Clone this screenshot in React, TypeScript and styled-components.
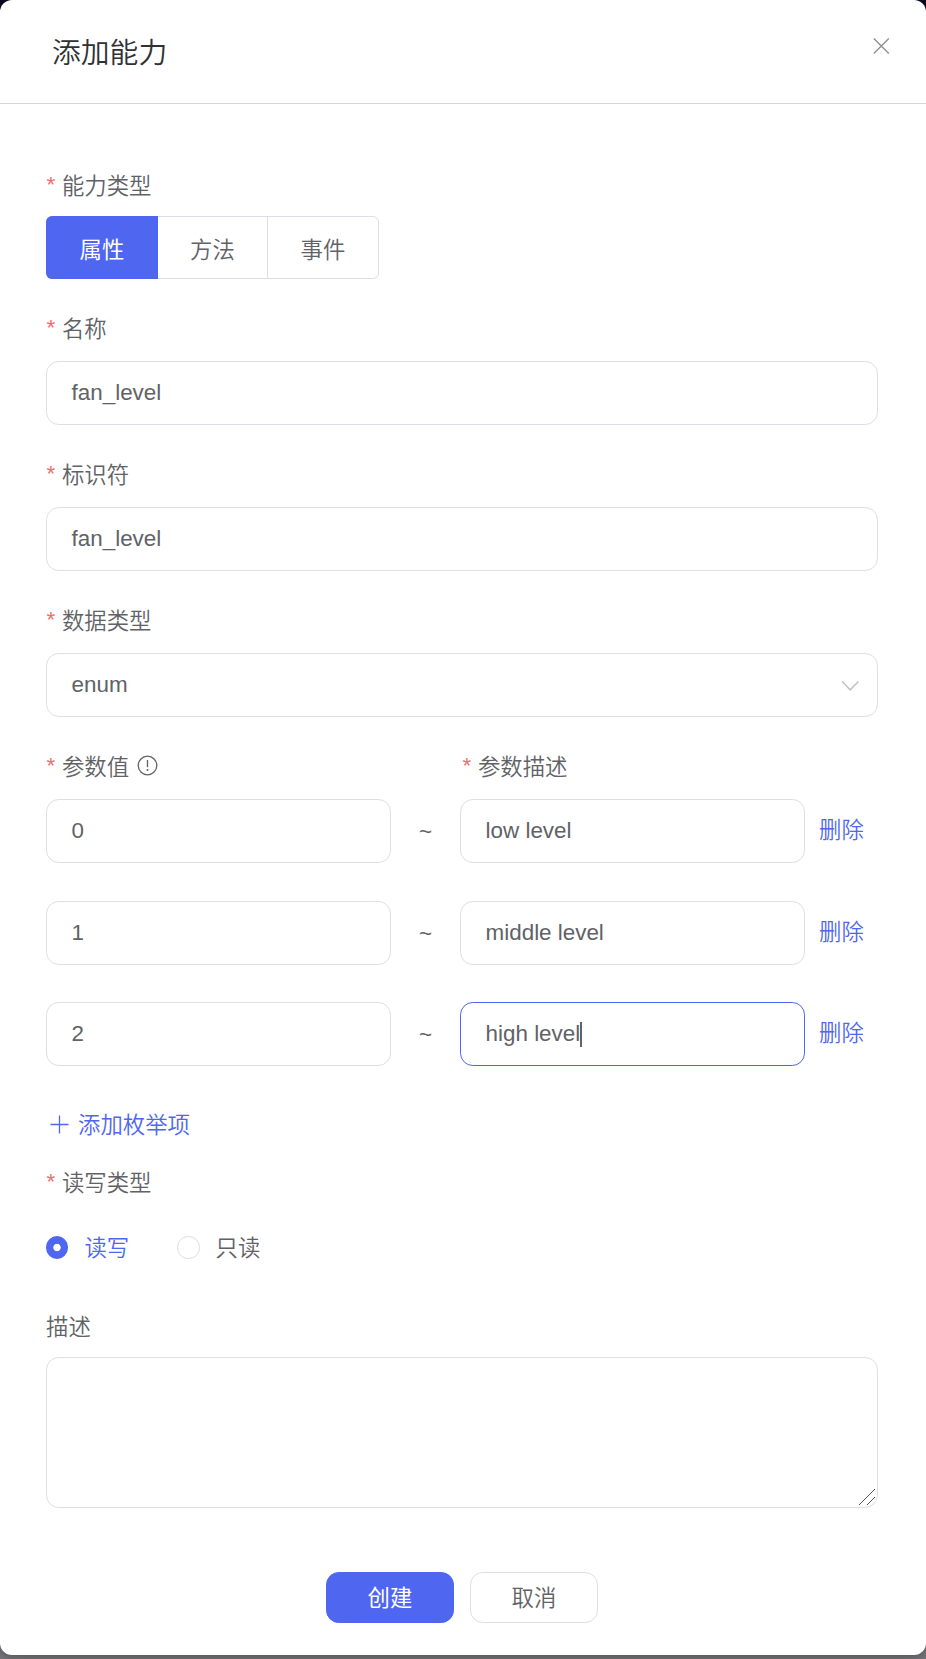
import React from 'react';
import styled, { createGlobalStyle, css } from 'styled-components';

const GlobalStyle = createGlobalStyle`
  *, *::before, *::after { box-sizing: border-box; }
  body {
    margin: 0;
    font-family: "Liberation Sans", "Noto Sans CJK SC", sans-serif;
    font-size: 22.4px;
    font-weight: 350;
    color: #606266;
  }
`;

const primary = '#4f66f0';
const line = '#dcdfe6';

const Backdrop = styled.div`
  height: 1659px;
  overflow: hidden;
  background: linear-gradient(#0b0b1e 0, #0b0b1e 100px, #76757a 200px);
`;

const Dialog = styled.div`
  display: flex;
  flex-direction: column;
  height: 1655px;
  border-radius: 12px;
  background: #fff;
  box-shadow: 0 2px 8px rgba(0, 0, 0, 0.3);
`;

const Header = styled.header`
  display: flex;
  justify-content: space-between;
  align-items: flex-start;
  height: 104px;
  padding: 29px 36px 0 52px;
  border-bottom: 1px solid #d6d6d9;
`;

const Title = styled.h1`
  margin: 2px 0 0;
  font-size: 28.8px;
  font-weight: 350;
  line-height: 44px;
  color: #303133;
`;

const CloseButton = styled.button`
  display: flex;
  margin-top: 7.5px;
  padding: 0;
  border: 0;
  background: none;
  color: #909399;
`;

const Form = styled.form`
  padding: 60px 48px 0 46px;
`;

const Label = styled.div<{ $required?: boolean }>`
  display: flex;
  align-items: center;
  height: 40px;
  white-space: nowrap;
  ${(p) =>
    p.$required &&
    css`
      &::before {
        content: '*';
        margin: 2px 6.6px 0 0.6px;
        color: #f56c6c;
      }
    `}
`;

const InfoIcon = styled.svg`
  margin-left: 8px;
`;

const Field = styled.div<{ $gap: number; $space: number }>`
  display: flex;
  flex-direction: column;
  gap: ${(p) => p.$gap}px;
  margin-bottom: ${(p) => p.$space}px;
`;

const Segments = styled.div`
  display: flex;
  width: 333px;
  height: 63px;
  border: 1px solid ${line};
  border-radius: 6px;
`;

const Segment = styled.div<{ $active?: boolean }>`
  display: flex;
  align-items: center;
  justify-content: center;
  width: 109px;
  & + & + & {
    width: 111px;
    border-left: 1px solid ${line};
  }
  ${(p) =>
    p.$active &&
    css`
      width: 112px;
      margin: -1px 0 -1px -1px;
      border-radius: 6px 0 0 6px;
      background: ${primary};
      color: #fff;
      font-weight: 400;
    `}
`;

const Control = styled.div<{ $focused?: boolean }>`
  display: flex;
  align-items: center;
  height: 64px;
  padding: 0 17px 0 24.6px;
  border: 1px solid ${(p) => (p.$focused ? primary : line)};
  border-radius: 12.8px;
  background: #fff;
`;

const Caret = styled.span`
  width: 2px;
  height: 25px;
  background: #606266;
`;

const Chevron = styled.svg`
  margin-left: auto;
  position: relative;
  top: 1px;
`;

const EnumGrid = styled.div`
  display: grid;
  grid-template-columns: 345px 69px 345px 1fr;
  align-items: center;
`;

const EnumLabels = styled(EnumGrid)`
  margin-bottom: 14px;
`;

const DescriptionLabel = styled(Label)`
  grid-column: 3;
  padding-left: 2px;
`;

const EnumRows = styled.div`
  display: flex;
  flex-direction: column;
  gap: 37.6px;
`;

const Tilde = styled.span`
  padding-top: 2px;
  text-align: center;
`;

const LinkText = styled.a`
  padding-left: 14px;
  margin-top: -6px;
  color: ${primary};
`;

const AddItem = styled.div`
  display: flex;
  align-items: center;
  gap: 8px;
  height: 40px;
  margin: 36.8px 0 18px 4px;
  color: ${primary};
`;

const PlusIcon = styled.svg`
  margin-top: 4px;
`;

const RadioRow = styled.div`
  display: flex;
  gap: 48px;
  height: 40px;
`;

const RadioOption = styled.label<{ $checked?: boolean }>`
  display: flex;
  align-items: center;
  gap: 16px;
  color: ${(p) => (p.$checked ? primary : 'inherit')};
`;

const RadioDot = styled.span<{ $checked?: boolean }>`
  width: 22.4px;
  height: 22.4px;
  margin-top: 3px;
  border-radius: 50%;
  border: 1px solid ${(p) => (p.$checked ? primary : line)};
  background: ${(p) =>
    p.$checked ? `radial-gradient(circle, #fff 3.3px, ${primary} 4.1px)` : '#fff'};
`;

const TextArea = styled.div`
  display: flex;
  justify-content: flex-end;
  align-items: flex-end;
  height: 151px;
  padding: 1px;
  border: 1px solid ${line};
  border-radius: 12.8px;
`;

const Actions = styled.footer`
  display: flex;
  justify-content: center;
  gap: 16px;
  padding-right: 2px;
  margin-top: 64px;
`;

const ActionButton = styled.button<{ $primary?: boolean }>`
  width: 128px;
  height: 51px;
  padding: 0 0 2px;
  border: 1px solid ${(p) => (p.$primary ? primary : line)};
  border-radius: 12.8px;
  background: ${(p) => (p.$primary ? primary : '#fff')};
  color: ${(p) => (p.$primary ? '#fff' : '#606266')};
  font: inherit;
  font-weight: ${(p) => (p.$primary ? 400 : 350)};
`;

const items = [
  { value: '0', text: 'low level' },
  { value: '1', text: 'middle level' },
  { value: '2', text: 'high level', focused: true },
];

export default function App() {
  return (
    <>
      <GlobalStyle />
      <Backdrop>
        <Dialog role="dialog">
          <Header>
            <Title>添加能力</Title>
            <CloseButton aria-label="关闭">
              <svg width="18" height="18" viewBox="0 0 18 18" fill="none" stroke="currentColor" strokeWidth="1.5">
                <path d="M1.8 1.5l15 15M16.8 1.5l-15 15" />
              </svg>
            </CloseButton>
          </Header>
          <Form>
            <Field $gap={12} $space={28}>
              <Label $required>能力类型</Label>
              <Segments>
                <Segment $active>属性</Segment>
                <Segment>方法</Segment>
                <Segment>事件</Segment>
              </Segments>
            </Field>
            <Field $gap={14} $space={28}>
              <Label $required>名称</Label>
              <Control>fan_level</Control>
            </Field>
            <Field $gap={14} $space={28}>
              <Label $required>标识符</Label>
              <Control>fan_level</Control>
            </Field>
            <Field $gap={14} $space={28}>
              <Label $required>数据类型</Label>
              <Control>
                enum
                <Chevron width="20" height="12" viewBox="0 0 20 12" fill="none" stroke="#c0c4cc" strokeWidth="1.6">
                  <path d="M2 1.5l8.2 8.4 8.2-8.4" />
                </Chevron>
              </Control>
            </Field>
            <EnumLabels>
              <Label $required>
                参数值
                <InfoIcon width="21" height="21" viewBox="0 0 21 21" fill="none" stroke="#606266" strokeWidth="1.3">
                  <circle cx="10.5" cy="10.5" r="9.3" />
                  <path d="M10.5 5v7.2" />
                  <circle cx="10.5" cy="14.9" r="1" fill="#606266" stroke="none" />
                </InfoIcon>
              </Label>
              <DescriptionLabel $required>参数描述</DescriptionLabel>
            </EnumLabels>
            <EnumRows>
              {items.map((item) => (
                <EnumGrid key={item.value}>
                  <Control>{item.value}</Control>
                  <Tilde>~</Tilde>
                  <Control $focused={item.focused}>
                    {item.text}
                    {item.focused && <Caret />}
                  </Control>
                  <LinkText>删除</LinkText>
                </EnumGrid>
              ))}
            </EnumRows>
            <AddItem>
              <PlusIcon width="20" height="20" viewBox="0 0 20 20" fill="none" stroke="currentColor" strokeWidth="1.3">
                <path d="M9.5 .5v18M.5 9.5h18" />
              </PlusIcon>
              添加枚举项
            </AddItem>
            <Field $gap={25} $space={38.6}>
              <Label $required>读写类型</Label>
              <RadioRow>
                <RadioOption $checked>
                  <RadioDot $checked />
                  读写
                </RadioOption>
                <RadioOption>
                  <RadioDot />
                  只读
                </RadioOption>
              </RadioRow>
            </Field>
            <Field $gap={12} $space={0}>
              <Label>描述</Label>
              <TextArea>
                <svg width="18" height="18" viewBox="0 0 18 18" stroke="#555" strokeWidth="1">
                  <path d="M1 17L17 1M9 17l8-8" />
                </svg>
              </TextArea>
            </Field>
          </Form>
          <Actions>
            <ActionButton $primary>创建</ActionButton>
            <ActionButton>取消</ActionButton>
          </Actions>
        </Dialog>
      </Backdrop>
    </>
  );
}
